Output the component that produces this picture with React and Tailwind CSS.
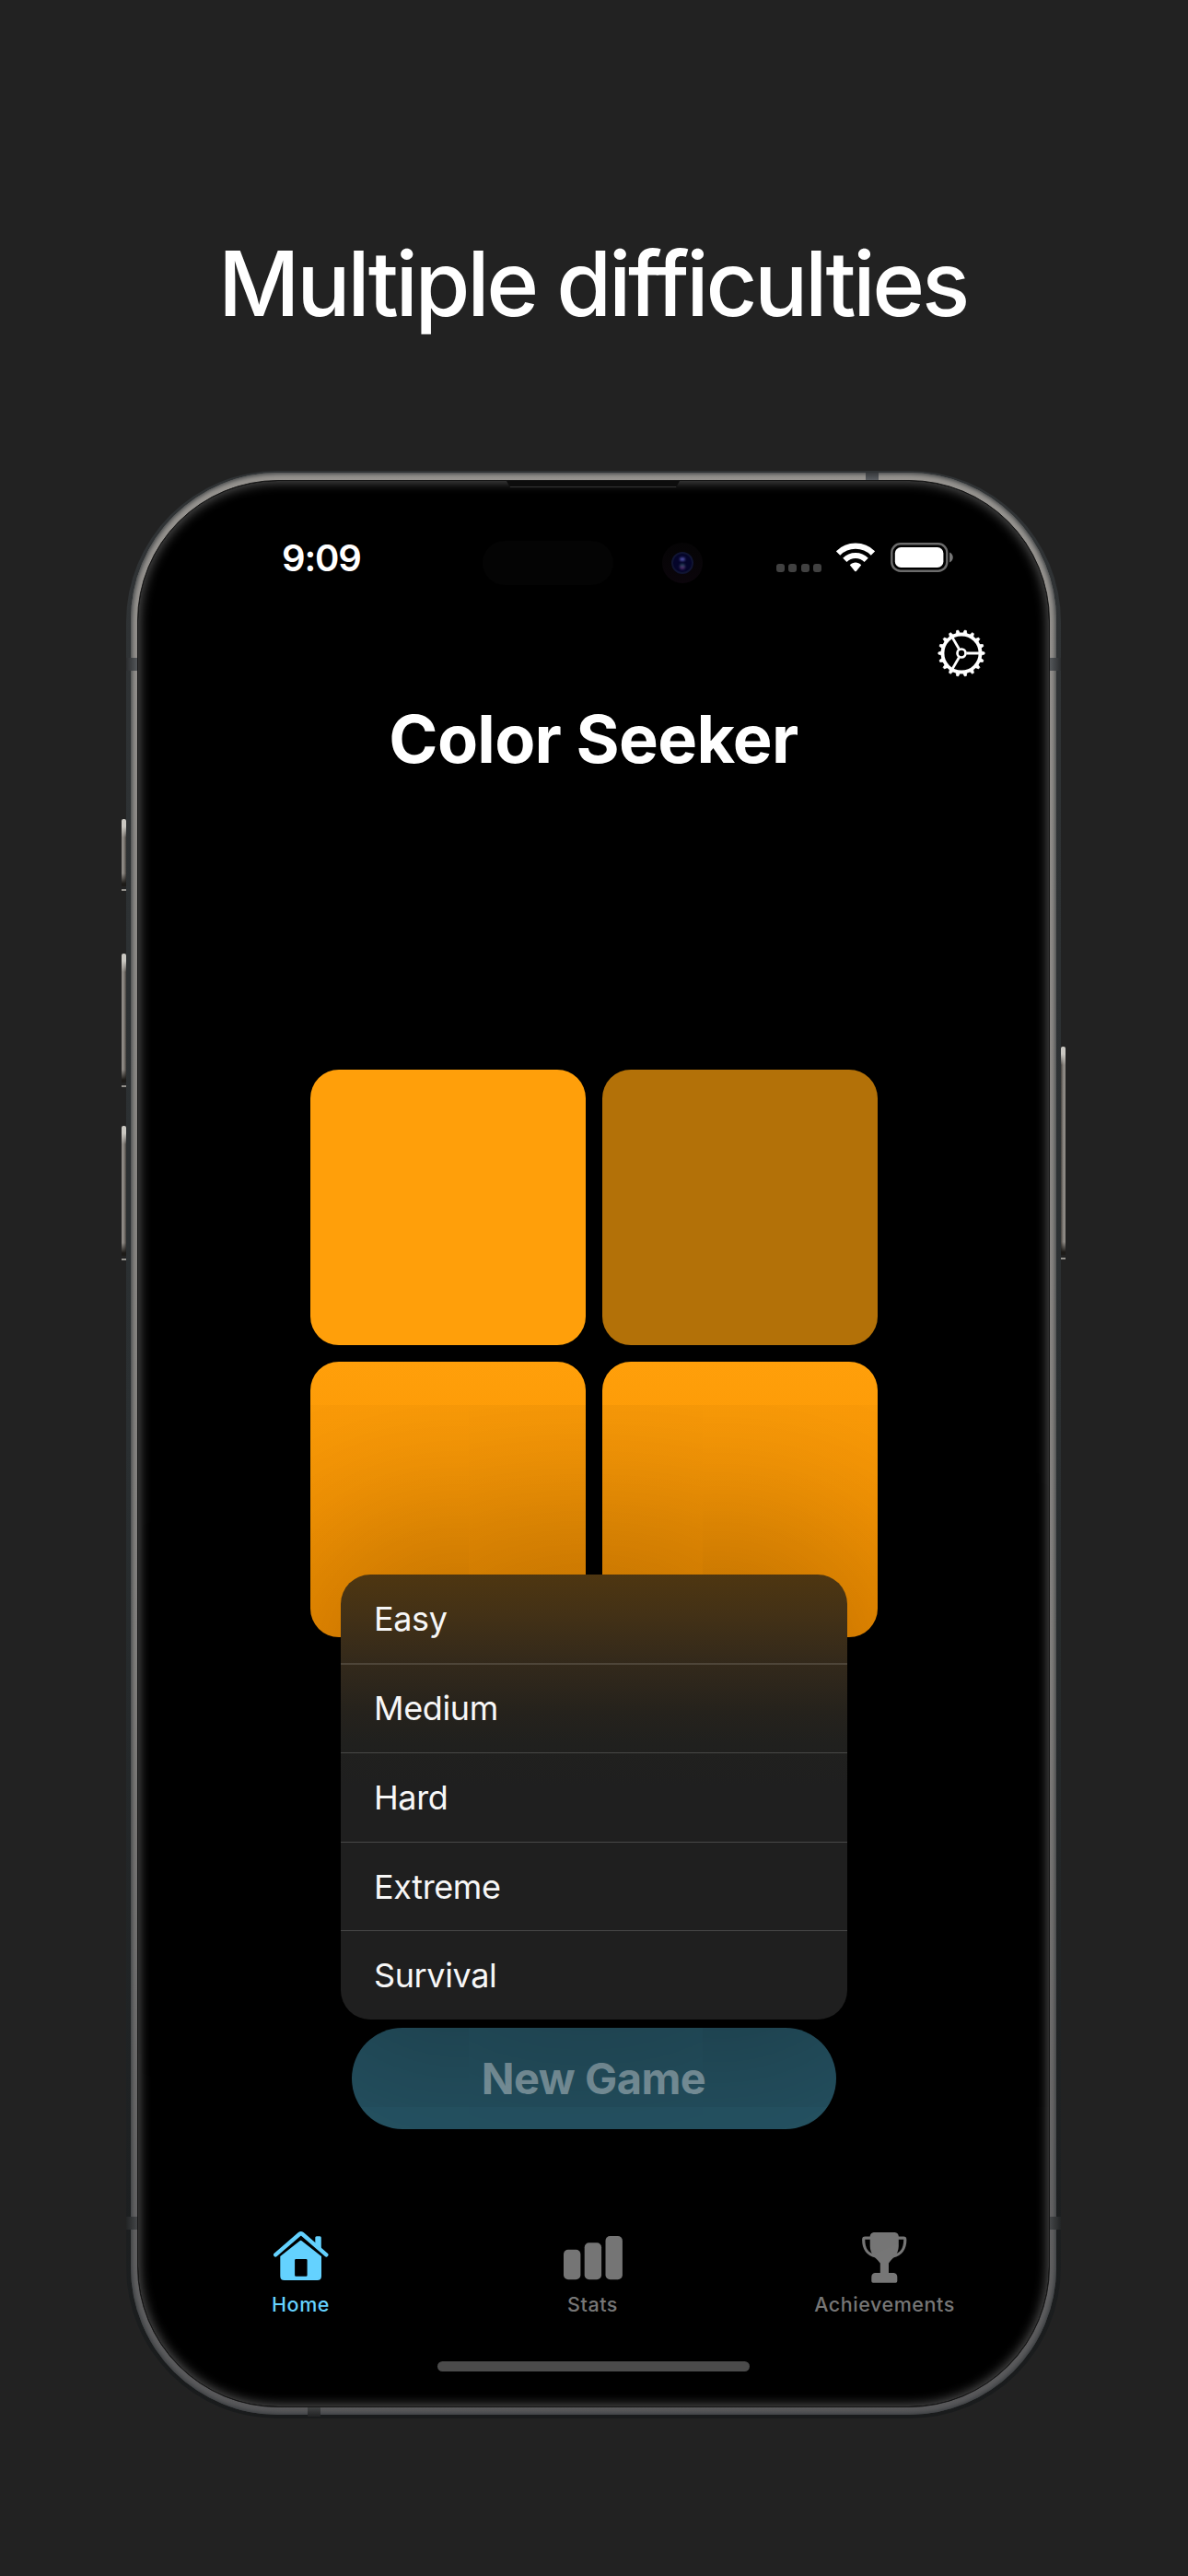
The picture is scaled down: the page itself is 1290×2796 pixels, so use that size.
import React from "react";

const difficulties = ["Easy", "Medium", "Hard", "Extreme", "Survival"];

function WifiIcon() {
  return (
    <svg className="h-8 w-[42px]" viewBox="0 0 42 32" fill="none">
      <path d="M2.05 11.55A26.8 26.8 0 0 1 39.95 11.55" stroke="#fff" strokeWidth="6.2" />
      <path d="M9.33 18.83A16.5 16.5 0 0 1 32.67 18.83" stroke="#fff" strokeWidth="6" />
      <path d="M14.8 24.2C18.4 20.7 23.6 20.7 27.2 24.2L22 30.8Q21 31.8 20 30.8Z" fill="#fff" />
    </svg>
  );
}

function BatteryIcon() {
  return (
    <svg className="h-8 w-[68px]" viewBox="0 0 68 32" fill="none">
      <rect x="1.3" y="1.3" width="60" height="29.4" rx="9.5" stroke="#6b6b6b" strokeWidth="2.4" />
      <rect x="4.8" y="5" width="52.6" height="22" rx="6.5" fill="#fff" />
      <path d="M64 10.5C69 12.5 69 19.5 64 21.5Z" fill="#777" />
    </svg>
  );
}

function GearIcon() {
  const teeth = Array.from({ length: 18 }, (_, i) => i * 20);
  return (
    <svg className="size-[52px]" viewBox="-26 -26 52 52" fill="none" stroke="#fff">
      <circle r="20.5" strokeWidth="3.8" />
      {teeth.map((a) => (
        <path key={a} d="M21 -2.3L25.1 -1V1L21 2.3Z" fill="#fff" strokeWidth="0.7" transform={`rotate(${a})`} />
      ))}
      <circle r="4.5" strokeWidth="2.7" />
      {[0, 120, 240].map((a) => (
        <path key={a} d="M5.4 0H19.5" strokeWidth="2.8" transform={`rotate(${a})`} />
      ))}
    </svg>
  );
}

function HomeIcon() {
  return (
    <svg className="h-[57px] w-[60px]" viewBox="0 0 60 57" fill="none">
      <path d="M2.2 26.3L28.4 3.8Q29.8 2.7 31.2 3.8L57.3 26.3" stroke="#64d2ff" strokeWidth="4.4" strokeLinecap="round" />
      <path d="M45.3 17V7.8Q45.3 6.3 46.8 6.3H50.3Q51.8 6.3 51.8 7.8V22.5Z" fill="#64d2ff" />
      <path
        fillRule="evenodd"
        fill="#64d2ff"
        d="M7.3 28L28.5 11.3Q29.6 10.4 30.7 11.3L52 28V49.5Q52 54 47.5 54H11.8Q7.3 54 7.3 49.5ZM24.3 31Q23.1 31 23.1 32.2V48.6Q23.1 49.8 24.3 49.8H35.4Q36.6 49.8 36.6 48.6V32.2Q36.6 31 35.4 31Z"
      />
    </svg>
  );
}

function StatsIcon() {
  return (
    <svg className="h-[57px] w-16" viewBox="0 0 64 57" fill="#767676">
      <rect x="0" y="20.7" width="18.4" height="32.6" rx="5" />
      <rect x="22.7" y="13.3" width="18.4" height="40" rx="5" />
      <rect x="45.5" y="6" width="18.4" height="47.3" rx="5" />
    </svg>
  );
}

function TrophyIcon() {
  return (
    <svg className="h-[57px] w-[49px]" viewBox="0 0 49 57" fill="none">
      <path
        fill="#767676"
        d="M12.8 2H35.7Q39.3 2.4 39.8 6V17Q39.6 24 35.3 28.5Q30.5 33 29 35.5V46H34.5Q38.3 46.6 38.3 50.5V55Q38.3 56.7 36.6 56.7H12Q10.3 56.7 10.3 55V50.5Q10.3 46.6 14 46H19.8V35.5Q18 33 13.2 28.5Q8.9 24 8.7 17V6Q9.2 2.4 12.8 2Z"
      />
      <path
        stroke="#767676"
        strokeWidth="3.2"
        d="M9.5 8.2H3.2Q1.7 8.2 1.7 10C1.7 19.5 5 25.5 15 28M39 8.2H45.3Q46.8 8.2 46.8 10C46.8 19.5 43.5 25.5 33.5 28"
      />
    </svg>
  );
}

function Tab({ icon, label, active }) {
  return (
    <div className={`flex flex-1 flex-col items-center ${active ? "text-[#64d2ff]" : "text-[#767676]"}`}>
      {icon}
      <span className="mt-[7px] text-[21.5px] leading-8 font-[450] tracking-[0.55px] whitespace-nowrap">{label}</span>
    </div>
  );
}

function StatusBar() {
  return (
    <div className="flex h-[150px] items-center pt-[18px] pl-[156px]">
      <span className="w-[218px] text-[40px] leading-[48px] font-semibold tracking-[-1.2px]">9:09</span>
      <div className="mt-[10px] h-12 w-[142px] rounded-full bg-[#040404]" />
      <div className="mt-[10px] ml-[53px] flex size-11 items-center justify-center rounded-full bg-linear-to-b from-[#050405] to-[#0b050b]">
        <div className="flex size-6 flex-col items-center gap-[3px] rounded-full border-2 border-[#101432] bg-[#05052a] pt-1">
          <span className="h-1 w-1.5 rounded-full bg-[#4a4a9c] blur-[1px]" />
          <span className="h-1.5 w-1.5 rounded-full bg-linear-to-b from-[#0b4a55] to-[#5a1a70] blur-[1px]" />
        </div>
      </div>
      <div className="mt-[20px] ml-20 flex gap-[4.4px]">
        {[0, 1, 2, 3].map((i) => (
          <span key={i} className="size-[9px] rounded-[3px] bg-[#414141]" />
        ))}
      </div>
      <div className="-mt-0.5 ml-4 flex gap-[17px]">
        <WifiIcon />
        <BatteryIcon />
      </div>
    </div>
  );
}

function DifficultyMenu() {
  return (
    <div className="absolute bottom-full left-1/2 mb-[9px] h-[483px] w-[550px] -translate-x-1/2 overflow-visible rounded-[32px] shadow-[0_0_260px_10px_rgba(0,4,0,0.46)]">
      <ul className="flex h-full flex-col overflow-hidden rounded-[32px] bg-[linear-gradient(180deg,#4e3611_0%,#433116_9%,#33291b_20%,#25221c_31%,#20201e_38%,#1f1f1f_48%,#1f1f1f_100%)]">
        {difficulties.map((name) => (
          <li
            key={name}
            className="flex flex-1 items-center border-b border-white/18 pl-[36.5px] text-[36px] tracking-[-0.38px] text-[#f7f7f7] first:border-b-2 first:border-white/13 last:border-b-0"
          >
            {name}
          </li>
        ))}
      </ul>
    </div>
  );
}

function SideButton({ className }) {
  return (
    <div className={`absolute w-[5px] ${className}`}>
      <div className="flex h-full flex-col justify-between">
        <div className="mb-[3px] flex-1 rounded-t-[2px] bg-[linear-gradient(180deg,#c9c7c1_0px,#c9c7c1_8px,transparent_20px),linear-gradient(0deg,#1d1b18_0px,#1d1b18_3px,transparent_14px),linear-gradient(90deg,#8c8883,#8c8883_45%,#45413d)]" />
        <div className="h-0.5 bg-[#93918c]" />
      </div>
    </div>
  );
}

function Phone() {
  return (
    <div className="relative -ml-px mt-[129px] h-[2114px] w-[1015px] rounded-[164px] bg-linear-to-b from-[#303335] via-[#2a2f31] to-[#191b1c] px-[5px] pt-0.5 pb-1">
      <SideButton className="top-[378px] -left-[5px] h-[78px]" />
      <SideButton className="top-[524px] -left-[5px] h-[145px]" />
      <SideButton className="top-[711px] -left-[5px] h-[146px]" />
      <SideButton className="top-[625px] -right-[5px] h-[231px] -scale-x-100" />

      <div className="h-full rounded-[160px] bg-linear-to-b from-[#96938f] via-[#83817e] via-60% to-[#58585a] px-[7px] py-2 shadow-[inset_0_0_5px_1px_#33373a]">
        <div className="flex h-full flex-col overflow-hidden rounded-[153px] border border-[#161616] bg-black shadow-[inset_0_0_12px_2px_#505050]">
          <StatusBar />
          <div className="flex h-[73px] items-center justify-end pr-[69.5px]">
            <GearIcon />
          </div>
          <h2 className="h-[114px] text-center text-[72px] leading-[114px] font-bold tracking-[-0.7px]">Color Seeker</h2>

          <div className="mt-[302px] grid h-[616px] w-[616px] grid-cols-2 gap-[18px] self-center">
            <div className="rounded-[31px] bg-[#ff9f0a]" />
            <div className="rounded-[31px] bg-[#b37108]" />
            <div className="rounded-[31px] bg-linear-to-b from-[#ff9f0a] to-[#f59000]" />
            <div className="rounded-[31px] bg-linear-to-b from-[#ff9f0a] to-[#f59000]" />
          </div>

          <div className="relative mt-[424px] w-[526px] self-center">
            <div className="h-[110px] rounded-full bg-[#255262] text-center text-[47px] leading-[110px] font-bold tracking-[-0.5px] text-[#7f9aa4]">
              New Game
            </div>
            <DifficultyMenu />
          </div>

          <div className="mt-[110px] flex pr-5 pl-[18px]">
            <Tab icon={<HomeIcon />} label="Home" active />
            <Tab icon={<StatsIcon />} label="Stats" />
            <Tab icon={<TrophyIcon />} label="Achievements" />
          </div>
          <div className="mt-[46px] h-[11px] w-[339px] self-center rounded-full bg-[#4b4b4b]" />
        </div>
      </div>

      {/* Earpiece slot and antenna bands */}
      <div className="absolute top-[11px] left-[413px] h-[7px] w-[188px] border-b border-[#333] bg-[#0d0d0d] [clip-path:polygon(0_0,100%_0,calc(100%-4px)_100%,4px_100%)]" />
      <div className="absolute top-0.5 left-[803px] h-2 w-[14px] bg-linear-to-b from-[#37393c] to-[#5a5d61]" />
      <div className="absolute top-[203px] left-0 h-[14px] w-3 bg-linear-to-r from-[#2a2c2e] to-[#55585b]" />
      <div className="absolute top-[203px] right-0 h-[14px] w-3 bg-linear-to-l from-[#2a2c2e] to-[#55585b]" />
      <div className="absolute top-[1895px] left-0 h-[14px] w-3 bg-linear-to-r from-[#222425] to-[#454749]" />
      <div className="absolute top-[1895px] right-0 h-[14px] w-3 bg-linear-to-l from-[#222425] to-[#454749]" />
      <div className="absolute bottom-0.5 left-[197px] h-[10px] w-[14px] bg-linear-to-t from-[#212223] to-[#424445]" />
    </div>
  );
}

export default function App() {
  return (
    <main className="flex h-[2796px] w-[1290px] flex-col items-center overflow-hidden bg-[#222222] pt-[234px] font-['Inter',sans-serif] text-white">
      <h1 className="mr-[3px] h-[148px] text-[97px] leading-[148px] font-medium tracking-[-3.35px] whitespace-nowrap">
        Multiple difficulties
      </h1>
      <Phone />
    </main>
  );
}
